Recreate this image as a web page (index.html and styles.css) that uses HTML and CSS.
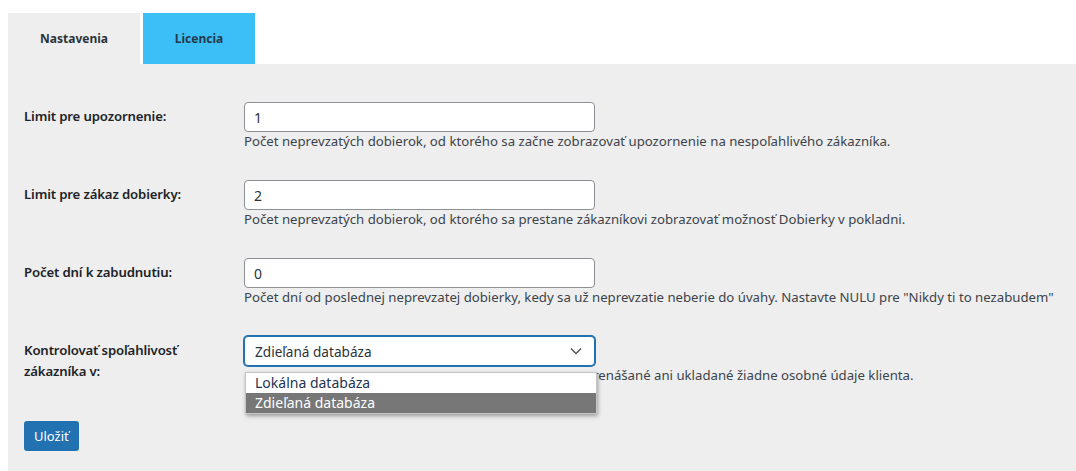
FILE: index.html
```html
<!DOCTYPE html>
<html lang="sk">
<head>
<meta charset="utf-8">
<title>Nastavenia</title>
<link rel="stylesheet" href="styles.css">
</head>
<body>
<div class="wrap">
  <nav class="tabs">
    <a class="tab tab-active">Nastavenia</a>
    <a class="tab tab-lic">Licencia</a>
  </nav>
  <div class="panel">
    <form class="form">
      <div class="row">
        <label class="lbl">Limit pre upozornenie:</label>
        <div class="field">
          <input class="inp" type="text" value="1">
          <p class="desc">Počet neprevzatých dobierok, od ktorého sa začne zobrazovať upozornenie na nespoľahlivého zákazníka.</p>
        </div>
      </div>
      <div class="row">
        <label class="lbl">Limit pre zákaz dobierky:</label>
        <div class="field">
          <input class="inp" type="text" value="2">
          <p class="desc">Počet neprevzatých dobierok, od ktorého sa prestane zákazníkovi zobrazovať možnosť Dobierky v pokladni.</p>
        </div>
      </div>
      <div class="row">
        <label class="lbl">Počet dní k zabudnutiu:</label>
        <div class="field">
          <input class="inp" type="text" value="0">
          <p class="desc">Počet dní od poslednej neprevzatej dobierky, kedy sa už neprevzatie neberie do úvahy. Nastavte NULU pre "Nikdy ti to nezabudem"</p>
        </div>
      </div>
      <div class="row">
        <label class="lbl">Kontrolovať spoľahlivosť zákazníka v:</label>
        <div class="field">
          <div class="select">
            <span>Zdieľaná databáza</span>
            <svg class="chev" width="12" height="8" viewBox="0 0 12 8"><path d="M1 1.5 L6 6.5 L11 1.5" fill="none" stroke="#50575e" stroke-width="1.5"/></svg>
          </div>
          <ul class="dropdown">
            <li class="opt">Lokálna databáza</li>
            <li class="opt opt-sel">Zdieľaná databáza</li>
          </ul>
          <p class="desc"><span class="hidden-part">V prípade použitia zdieľanej databázy nie sú na server p</span>renášané ani ukladané žiadne osobné údaje klienta.</p>
        </div>
      </div>
      <button class="btn" type="button">Uložiť</button>
    </form>
  </div>
</div>
</body>
</html>
```

FILE: styles.css
```css
html, body {
  margin: 0;
  padding: 0;
  background: #ffffff;
}
body {
  font-family: "Noto Sans", "Open Sans", sans-serif;
  color: #1d2327;
}
.wrap {
  padding: 13px 0 0 8px;
}
.tabs {
  display: flex;
  gap: 3px;
}
.tab {
  display: flex;
  align-items: center;
  justify-content: center;
  height: 51px;
  font-size: 12px;
  font-weight: 700;
  color: #2c3338;
}
.tab-active {
  width: 132px;
  background: #eeeeee;
}
.tab-lic {
  width: 112px;
  background: #3cbff6;
  color: #24384a;
}
.panel {
  background: #eeeeee;
  min-height: 407px;
  padding: 38px 0 0 16px;
  box-sizing: border-box;
}
.form {
  display: flex;
  flex-direction: column;
}
.row {
  display: flex;
  margin-bottom: 30px;
}
.lbl {
  width: 220px;
  flex: none;
  padding-top: 4px;
  padding-right: 30px;
  box-sizing: border-box;
  font-size: 13.2px;
  line-height: 21px;
  font-weight: 600;
  letter-spacing: -0.15px;
  color: #1d2327;
}
.field {
  position: relative;
  width: 351px;
}
.inp {
  display: block;
  width: 351px;
  height: 30px;
  box-sizing: border-box;
  margin: 0;
  padding: 0 9px;
  border: 1px solid #8c8f94;
  border-radius: 4px;
  background: #ffffff;
  font-family: inherit;
  font-size: 14px;
  color: #2c3338;
  outline: none;
}
.desc {
  margin: 0;
  white-space: nowrap;
  font-size: 13.2px;
  line-height: 18px;
  color: #3c434a;
}
.select {
  display: flex;
  align-items: center;
  justify-content: space-between;
  height: 30px;
  box-sizing: border-box;
  padding: 0 12px 0 10px;
  border: 1px solid #2271b1;
  box-shadow: 0 0 0 1px #2271b1;
  border-radius: 4px;
  background: #ffffff;
  font-size: 13.6px;
  color: #2c3338;
}
.dropdown {
  position: absolute;
  top: 36px;
  left: 1px;
  width: 350px;
  margin: 0;
  padding: 0;
  list-style: none;
  background: #ffffff;
  border: 1px solid #c3c4c7;
  box-shadow: 1px 2px 4px rgba(0, 0, 0, 0.35);
  z-index: 5;
}
.opt {
  height: 20px;
  line-height: 20px;
  padding-left: 9px;
  font-size: 14px;
  color: #1d3550;
}
.opt-sel {
  background: #777777;
  color: #ffffff;
}
.hidden-part {
  visibility: hidden;
  padding-right: 6px;
}
.btn {
  align-self: flex-start;
  margin-top: 7px;
  height: 30px;
  padding: 0 10px;
  border: none;
  border-radius: 3px;
  background: #2271b1;
  color: #ffffff;
  font-family: inherit;
  font-size: 13px;
}
```
